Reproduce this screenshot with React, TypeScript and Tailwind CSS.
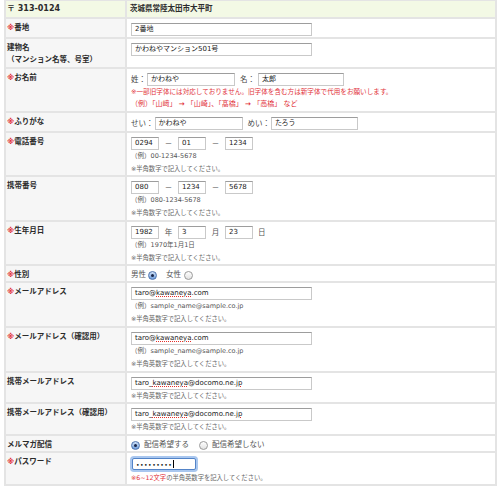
import clsx from 'clsx'
import type { ReactNode } from 'react'

const RED = 'text-[#e2323a]'

function Req() {
  return <span className={RED}>※</span>
}

function Row({
  label,
  req,
  h,
  children,
}: {
  label: ReactNode
  req?: boolean
  h: string
  children?: ReactNode
}) {
  return (
    <div className={clsx('flex border-b-2 border-[#e4e4e4]', h)}>
      <div className="w-[121px] shrink-0 border-r-2 border-[#e4e4e4] bg-[#f6f6f6] pl-[1px] pt-[3px] text-[7.5px] leading-[12px] font-bold text-[#2b2b2b]">
        {req && <Req />}
        {label}
      </div>
      <div className="min-w-0 flex-1 pl-[4px] pt-[4px] text-[7px] text-[#333]">{children}</div>
    </div>
  )
}

function Box({ w, children }: { w: string; children?: ReactNode }) {
  return (
    <div
      className={clsx(
        'flex h-[13px] shrink-0 items-center overflow-hidden whitespace-nowrap border border-[#c9c9c9] border-t-[#9d9d9d] bg-white px-[3px] text-[7px] text-[#1a1a1a]',
        w,
      )}
    >
      {children}
    </div>
  )
}

function Radio({ on }: { on?: boolean }) {
  return on ? (
    <span className="flex h-[9px] w-[9px] shrink-0 items-center justify-center rounded-full border border-[#4e74b0] bg-linear-to-b from-[#cfe1f7] to-[#6f9ddb]">
      <span className="block h-[3px] w-[3px] rounded-full bg-[#18264a]" />
    </span>
  ) : (
    <span className="block h-[9px] w-[9px] shrink-0 rounded-full border border-[#9a9a9a] bg-linear-to-b from-[#ffffff] to-[#e2e2e2]" />
  )
}

function Ex({ children }: { children: ReactNode }) {
  return <p className="text-[6.5px] leading-[13px] text-[#555]">{children}</p>
}

function Note({ children }: { children: ReactNode }) {
  return <p className="text-[6.3px] leading-[12px] text-[#666]">{children}</p>
}

function Sep({ children }: { children: ReactNode }) {
  return <span className="w-[19px] shrink-0 text-center text-[7.5px] text-[#555]">{children}</span>
}

function Spell({ children }: { children: ReactNode }) {
  return (
    <span className="underline decoration-[#e5312b] decoration-dotted decoration-1 underline-offset-1">
      {children}
    </span>
  )
}

export default function App() {
  return (
    <div className="h-[491px] w-[500px] bg-white font-['DejaVu_Sans','Noto_Sans_CJK_JP',sans-serif]">
      <div className="ml-[4px] w-[493px] border-x-2 border-t border-[#e4e4e4]">
        {/* Header */}
        <div className="flex h-[18px] border-b-2 border-[#e4e4e4] bg-[#f3f9e5]">
          <div className="w-[121px] shrink-0 border-r-2 border-[#e4e4e4] pl-[1px] pt-[2px] text-[8px] leading-[12px] font-bold text-[#2b2b2b]">
            〒 313-0124
          </div>
          <div className="flex-1 pl-[3px] pt-[2px] text-[7.5px] leading-[12px] font-bold text-[#2b2b2b]">
            茨城県常陸太田市大平町
          </div>
        </div>

        <Row label="番地" req h="h-[20px]">
          <Box w="w-[181px]">2番地</Box>
        </Row>

        <Row
          h="h-[30px]"
          label={
            <>
              建物名
              <br />
              （マンション名等、号室）
            </>
          }
        >
          <Box w="w-[181px]">かわねやマンション501号</Box>
        </Row>

        <Row label="お名前" req h="h-[44px]">
          <div className="flex items-center">
            <span className="text-[7.5px] text-[#444]">姓：</span>
            <div className="ml-[1px]">
              <Box w="w-[88px]">かわねや</Box>
            </div>
            <span className="ml-[5px] text-[7.5px] text-[#444]">名：</span>
            <div className="ml-[3px]">
              <Box w="w-[86px]">太郎</Box>
            </div>
          </div>
          <p className={clsx('text-[6.6px] leading-[12px]', RED)}>
            ※一部旧字体には対応しておりません。旧字体を含む方は新字体で代用をお願いします。
          </p>
          <p className={clsx('text-[7px] leading-[12px]', RED)}>
            （例）「山﨑」 <span className="font-bold">→</span> 「山崎」、「髙橋」 <span className="font-bold">→</span> 「高橋」 など
          </p>
        </Row>

        <Row label="ふりがな" req h="h-[20px]">
          <div className="flex items-center">
            <span className="text-[7.5px] text-[#444]">せい：</span>
            <div className="ml-[1px]">
              <Box w="w-[88px]">かわねや</Box>
            </div>
            <span className="ml-[5px] text-[7.5px] text-[#444]">めい：</span>
            <div className="ml-[1px]">
              <Box w="w-[87px]">たろう</Box>
            </div>
          </div>
        </Row>

        <Row label="電話番号" req h="h-[44px]">
          <div className="flex items-center">
            <Box w="w-[28px]">0294</Box>
            <Sep>－</Sep>
            <Box w="w-[28px]">01</Box>
            <Sep>－</Sep>
            <Box w="w-[28px]">1234</Box>
          </div>
          <Ex>（例）00-1234-5678</Ex>
          <Note>※半角数字で記入してください。</Note>
        </Row>

        <Row label="携帯番号" h="h-[45px]">
          <div className="flex items-center">
            <Box w="w-[28px]">080</Box>
            <Sep>－</Sep>
            <Box w="w-[28px]">1234</Box>
            <Sep>－</Sep>
            <Box w="w-[28px]">5678</Box>
          </div>
          <Ex>（例）080-1234-5678</Ex>
          <Note>※半角数字で記入してください。</Note>
        </Row>

        <Row label="生年月日" req h="h-[44px]">
          <div className="flex items-center">
            <Box w="w-[28px]">1982</Box>
            <Sep>年</Sep>
            <Box w="w-[28px]">3</Box>
            <Sep>月</Sep>
            <Box w="w-[28px]">23</Box>
            <span className="ml-[5px] text-[7.5px] text-[#555]">日</span>
          </div>
          <Ex>（例）1970年1月1日</Ex>
          <Note>※半角数字で記入してください。</Note>
        </Row>

        <Row label="性別" req h="h-[17px]">
          <div className="-mt-[1px] flex h-[12px] items-center text-[7.5px] text-[#555]">
            <span>男性</span>
            <span className="ml-[2px] block">
              <Radio on />
            </span>
            <span className="ml-[9px]">女性</span>
            <span className="ml-[3px] block">
              <Radio />
            </span>
          </div>
        </Row>

        <Row label="メールアドレス" req h="h-[45px]">
          <Box w="w-[181px]">
            taro@<Spell>kawaneya</Spell>.com
          </Box>
          <Ex>（例）sample_name@sample.co.jp</Ex>
          <Note>※半角英数字で記入してください。</Note>
        </Row>

        <Row label="メールアドレス（確認用）" req h="h-[45px]">
          <Box w="w-[181px]">
            taro@<Spell>kawaneya</Spell>.com
          </Box>
          <Ex>（例）sample_name@sample.co.jp</Ex>
          <Note>※半角英数字で記入してください。</Note>
        </Row>

        <Row label="携帯メールアドレス" h="h-[31px]">
          <Box w="w-[181px]">
            taro_<Spell>kawaneya</Spell>@docomo.ne.<Spell>jp</Spell>
          </Box>
          <Note>※半角英数字で記入してください。</Note>
        </Row>

        <Row label="携帯メールアドレス（確認用）" h="h-[32px]">
          <Box w="w-[181px]">
            taro_<Spell>kawaneya</Spell>@docomo.ne.<Spell>jp</Spell>
          </Box>
          <Note>※半角英数字で記入してください。</Note>
        </Row>

        <Row label="メルマガ配信" h="h-[17px]">
          <div className="-mt-[1px] flex h-[12px] items-center text-[7.5px] text-[#555]">
            <Radio on />
            <span className="ml-[4px]">配信希望する</span>
            <span className="ml-[10px] block">
              <Radio />
            </span>
            <span className="ml-[4px]">配信希望しない</span>
          </div>
        </Row>

        <Row label="パスワード" req h="h-[33px]">
          <div className="ml-[1px] mt-[1px] flex h-[12px] w-[64px] items-center rounded-[2px] border border-[#5384c8] bg-white px-[3px] text-[6px] tracking-[0.5px] text-[#111] shadow-[0_0_0_2px_#a9c7ef]">
            •••••••••
            <span className="ml-[1px] h-[8px] w-px bg-black" />
          </div>
          <p className="mt-[2px] text-[6.3px] leading-[12px] text-[#666]">
            <span className={RED}>※6~12文字</span>の半角英数字を記入してください。
          </p>
        </Row>
      </div>
    </div>
  )
}
